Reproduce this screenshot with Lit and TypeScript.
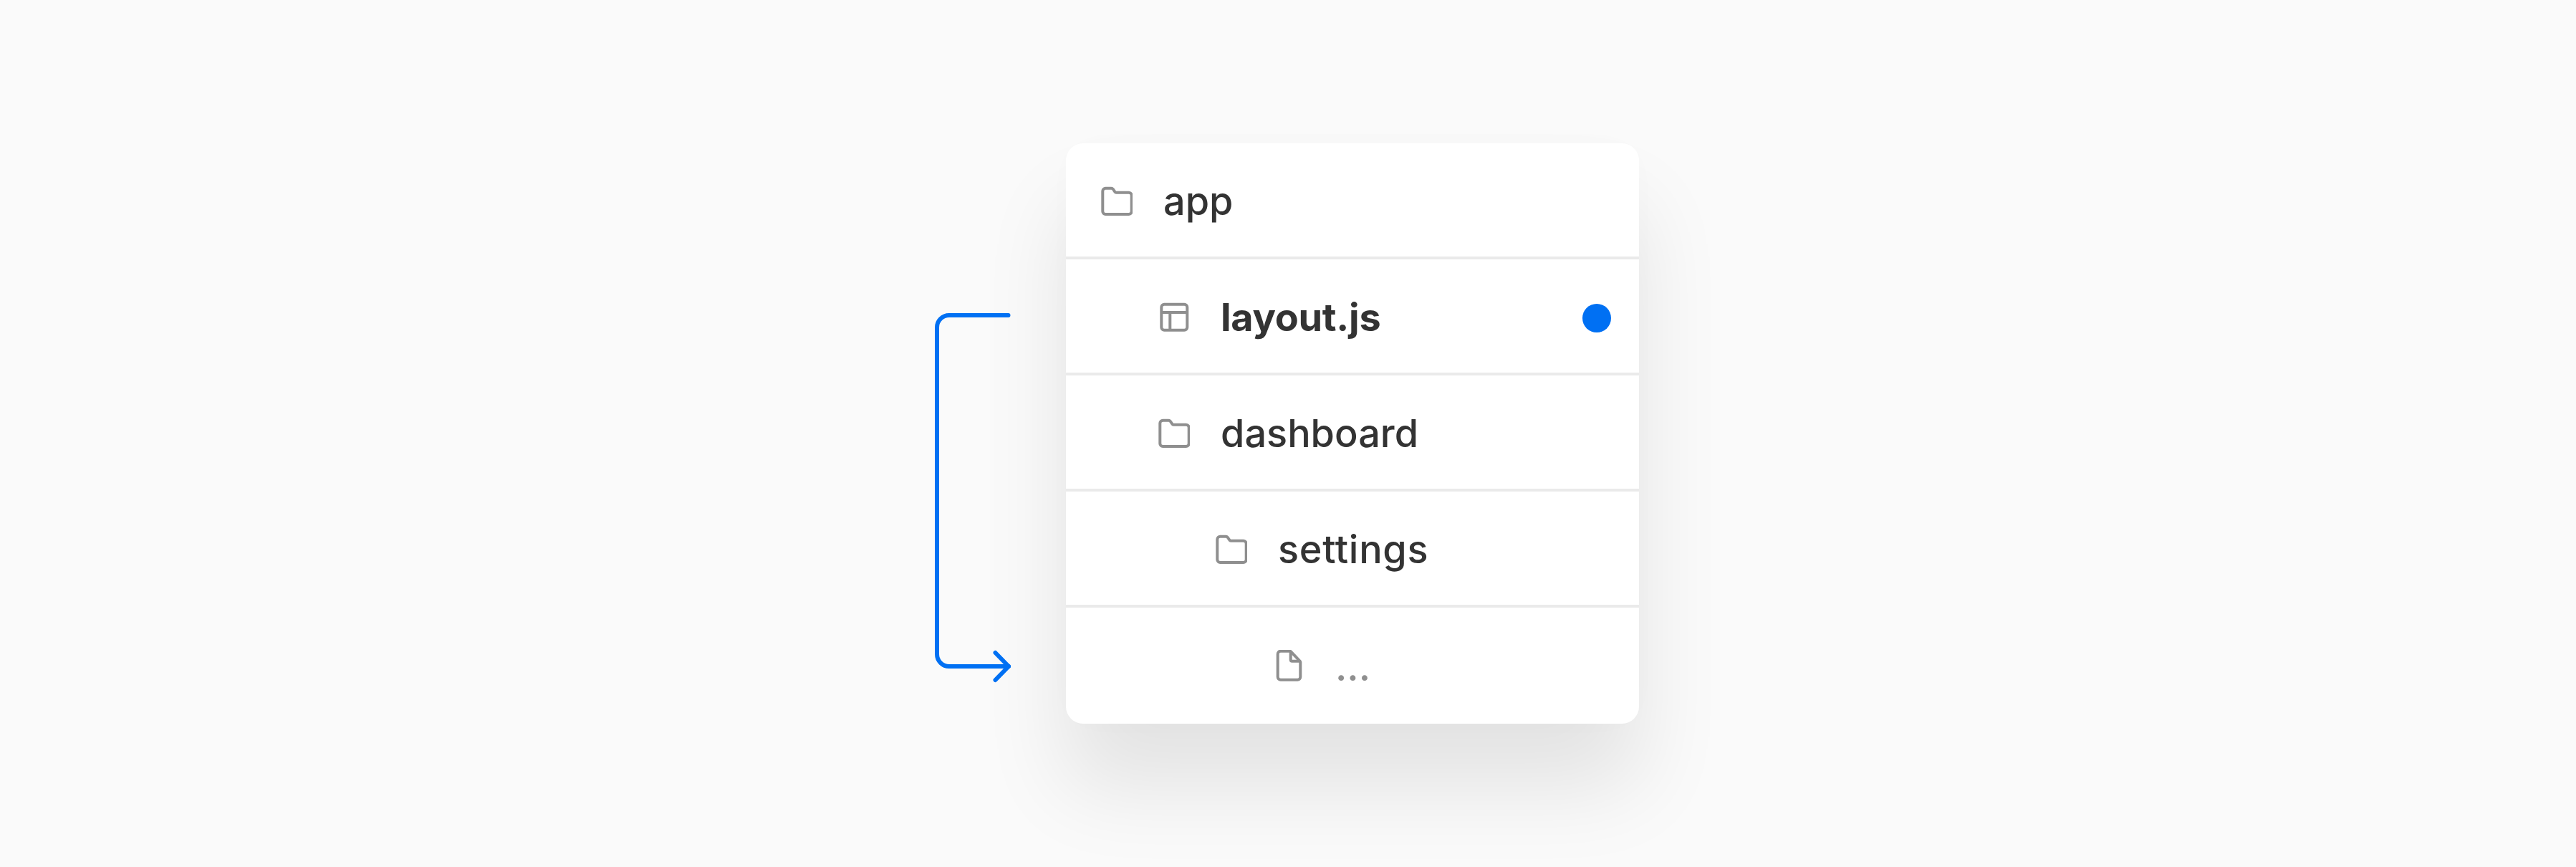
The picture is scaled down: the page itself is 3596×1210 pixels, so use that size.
import { LitElement, html, css, svg } from "lit";
import { customElement } from "lit/decorators.js";

type Row = { icon: "folder" | "layout" | "file"; label: string; level: number; tracking: number; kind?: "bold" | "muted"; dot?: boolean };

const ROWS: Row[] = [
  { icon: "folder", label: "app", level: 0, tracking: 0 },
  { icon: "layout", label: "layout.js", level: 1, tracking: -0.3, kind: "bold", dot: true },
  { icon: "folder", label: "dashboard", level: 1, tracking: 0 },
  { icon: "folder", label: "settings", level: 2, tracking: 0.7 },
  { icon: "file", label: "...", level: 3, tracking: 0, kind: "muted" },
];

const ICONS = {
  folder: svg`<path d="M2.3 9.7a4 4 0 0 1 4-4h8a3 3 0 0 1 2.4 1.2l2.8 3.9a2 2 0 0 0 1.6.9h17.6a4 4 0 0 1 4 4V38a4 4 0 0 1-4 4H6.3a4 4 0 0 1-4-4z"/>`,
  layout: svg`<rect x="4.3" y="5.7" width="36" height="36" rx="4"/><path d="M4.3 17h36M16.3 17v24.7"/>`,
  file: svg`<path d="M6.7 5.7a4 4 0 0 1 4-4h12.8a2 2 0 0 1 1.5.7l12.8 13.5a2 2 0 0 1 .5 1.3v20.5a4 4 0 0 1-4 4H10.7a4 4 0 0 1-4-4z"/><path d="M24.7 2v11.7a2 2 0 0 0 2 2H38"/>`,
};

@customElement("app-root")
export class AppRoot extends LitElement {
  static styles = css`
    :host {
      display: block;
      width: 3596px;
      height: 1210px;
      background: #fafafa;
      font-family: Inter, "Liberation Sans", sans-serif;
      overflow: hidden;
    }
    .stage {
      box-sizing: border-box;
      height: 100%;
      padding: 200px 0 0 1488px;
    }
    .card {
      position: relative;
      width: 800px;
      background: #fff;
      border-radius: 24px;
      box-shadow: 0 88px 120px rgba(0, 0, 0, 0.096), 0 0 60px rgba(0, 0, 0, 0.012);
      display: flex;
      flex-direction: column;
    }
    .row {
      height: 158px;
      display: flex;
      align-items: center;
      gap: 43px;
      padding-right: 39px;
      border-bottom: 4px solid #eaeaea;
      font-size: 54px;
      font-weight: 450;
      color: #333;
    }
    .row:last-of-type {
      height: 162px;
      border-bottom: none;
    }
    .label {
      padding-top: 2px;
    }
    .icon {
      flex: none;
      width: 44px;
      height: 44px;
      fill: none;
      stroke: #8f8f8f;
      stroke-width: 4;
      stroke-linejoin: round;
    }
    .bold {
      font-weight: 700;
    }
    .muted {
      color: #8f8f8f;
    }
    .dot {
      margin-left: auto;
      margin-top: 5px;
      width: 40px;
      height: 40px;
      border-radius: 50%;
      background: #0070f3;
    }
    .connector {
      position: absolute;
      left: -188px;
      top: 230px;
      width: 112px;
      height: 530px;
      fill: none;
      stroke: #0070f3;
      stroke-width: 6;
      stroke-linecap: round;
      stroke-linejoin: round;
    }
  `;

  render() {
    return html`
      <div class="stage">
        <div class="card">
          ${ROWS.map(
            (r) => html`
              <div class="row" style="padding-left:${49 + r.level * 80}px">
                <svg class="icon" viewBox="0 0 44 44">${ICONS[r.icon]}</svg>
                <span class="label ${r.kind ?? ""}" style="letter-spacing:${r.tracking}px">${r.label}</span>
                ${r.dot ? html`<span class="dot"></span>` : ""}
              </div>
            `
          )}
          <svg class="connector" viewBox="0 0 112 530">
            <path d="M107.5 10H25a17 17 0 0 0-17 17v456a17 17 0 0 0 17 17h83"/>
            <path d="M89.5 481L108 500L89.5 519"/>
          </svg>
        </div>
      </div>
    `;
  }
}
